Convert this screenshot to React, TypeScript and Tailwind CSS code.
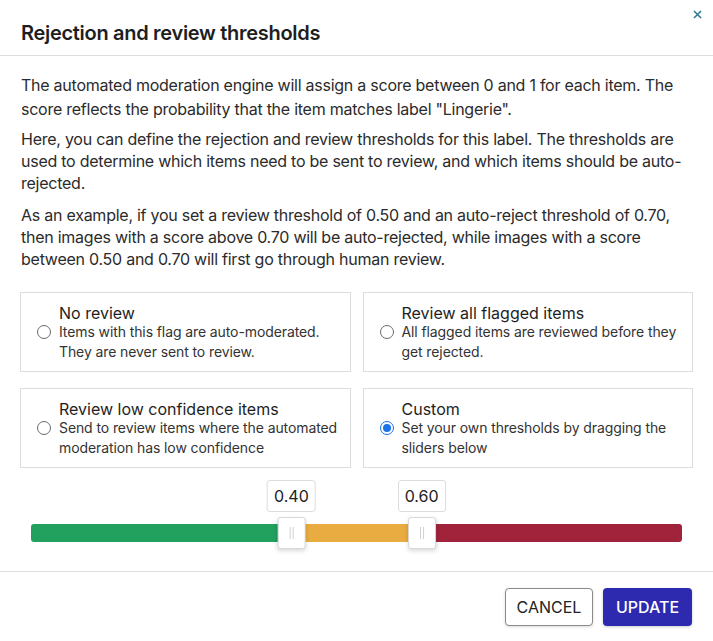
import React, { useState } from 'react';

const options = [
  {
    id: 'none',
    title: 'No review',
    desc: 'Items with this flag are auto-moderated. They are never sent to review.',
  },
  {
    id: 'all',
    title: 'Review all flagged items',
    desc: 'All flagged items are reviewed before they get rejected.',
  },
  {
    id: 'low',
    title: 'Review low confidence items',
    desc: 'Send to review items where the automated moderation has low confidence',
  },
  {
    id: 'custom',
    title: 'Custom',
    desc: 'Set your own thresholds by dragging the sliders below',
  },
];

function Thumb({ value }: { value: number }) {
  return (
    <div
      className="absolute top-0 -translate-x-1/2 flex flex-col items-center"
      style={{ left: `${value * 100}%` }}
    >
      <div className="h-[32px] px-[6px] flex items-center justify-center bg-white border border-[#dcdcdc] rounded-[3px] text-[16px] text-[#222]">
        {value.toFixed(2)}
      </div>
      <div className="mt-[5px] w-[28px] h-[32px] bg-white border border-[#d8d8d8] rounded-[3px] shadow-[0_2px_4px_rgba(0,0,0,0.15)] flex items-center justify-center gap-[2px]">
        <span className="w-px h-[12px] bg-[#d0d0d0]" />
        <span className="w-px h-[12px] bg-[#d0d0d0]" />
      </div>
    </div>
  );
}

export default function App() {
  const [selected, setSelected] = useState('custom');
  const low = 0.4;
  const high = 0.6;

  return (
    <div className="w-[713px] h-[641px] bg-white font-['Inter',sans-serif] text-[#222] relative">
      {/* Header */}
      <div className="h-[56px] border-b border-[#dddddd] flex items-center px-[21px] pt-[10px]">
        <h1 className="text-[20px] font-semibold text-[#1e1e1e] tracking-[-0.3px]">Rejection and review thresholds</h1>
      </div>
      <button className="absolute top-[6px] right-[8px] w-[16px] h-[16px] flex items-center justify-center">
        <svg width="9" height="9" viewBox="0 0 9 9" stroke="#2a7a8c" strokeWidth="1.5">
          <path d="M1 1L8 8M8 1L1 8" />
        </svg>
      </button>

      {/* Body */}
      <div className="px-[21px] pt-[17px] text-[16px] leading-[22px] text-[#2b2b2b] tracking-[-0.25px]">
        <p className="leading-[24px]">
          The automated moderation engine will assign a score between 0 and 1 for each item. The score reflects the probability that the item matches label "Lingerie".
        </p>
        <p className="mt-[7px]">
          Here, you can define the rejection and review thresholds for this label. The thresholds are used to determine which items need to be sent to review, and which items should be auto-rejected.
        </p>
        <p className="mt-[10px]">
          As an example, if you set a review threshold of 0.50 and an auto-reject threshold of 0.70, then images with a score above 0.70 will be auto-rejected, while images with a score between 0.50 and 0.70 will first go through human review.
        </p>
      </div>

      <div className="mx-[20px] mt-[22px] grid grid-cols-2 gap-x-[12px] gap-y-[16px]">
        {options.map((o) => (
          <label
            key={o.id}
            className="h-[80px] border border-[#dcdcdc] pl-[16px] pr-[2px] pt-[10px] flex items-start cursor-pointer"
            onClick={() => setSelected(o.id)}
          >
            <div className="mt-[22px] mr-[8px] shrink-0">
              {selected === o.id ? (
                <span className="block w-[14px] h-[14px] rounded-full border-[1.5px] border-[#1a73e8] flex items-center justify-center">
                  <span className="block w-[8px] h-[8px] rounded-full bg-[#1a73e8]" />
                </span>
              ) : (
                <span className="block w-[14px] h-[14px] rounded-full border border-[#6a6a6a]" />
              )}
            </div>
            <div>
              <div className="text-[16px] leading-[20px] text-[#1e1e1e]">{o.title}</div>
              <div className="text-[14px] leading-[20px] text-[#333] -mt-[1px] tracking-[-0.1px]">{o.desc}</div>
            </div>
          </label>
        ))}
      </div>

      {/* Slider */}
      <div className="mx-[31px] mt-[12px] relative h-[82px]">
        <div className="absolute left-0 right-0 top-[44px] h-[18px] rounded-[3px] overflow-hidden flex">
          <div className="bg-[#22a05e]" style={{ width: `${low * 100}%` }} />
          <div className="bg-[#e8ac40]" style={{ width: `${(high - low) * 100}%` }} />
          <div className="bg-[#a1233b] flex-1" />
        </div>
        <Thumb value={low} />
        <Thumb value={high} />
      </div>

      {/* Footer */}
      <div className="absolute left-0 right-0 top-[571px] border-t border-[#dddddd] flex justify-end gap-[10px] pt-[16px] pr-[21px]">
        <button className="w-[88px] h-[38px] border border-[#8a8a8a] rounded-[4px] bg-white text-[16px] text-[#222] shadow-[0_1px_3px_rgba(0,0,0,0.15)]">
          CANCEL
        </button>
        <button className="w-[89px] h-[38px] rounded-[4px] bg-[#2d2ab0] text-[16px] font-medium text-white shadow-[0_1px_3px_rgba(0,0,0,0.2)]">
          UPDATE
        </button>
      </div>
    </div>
  );
}
